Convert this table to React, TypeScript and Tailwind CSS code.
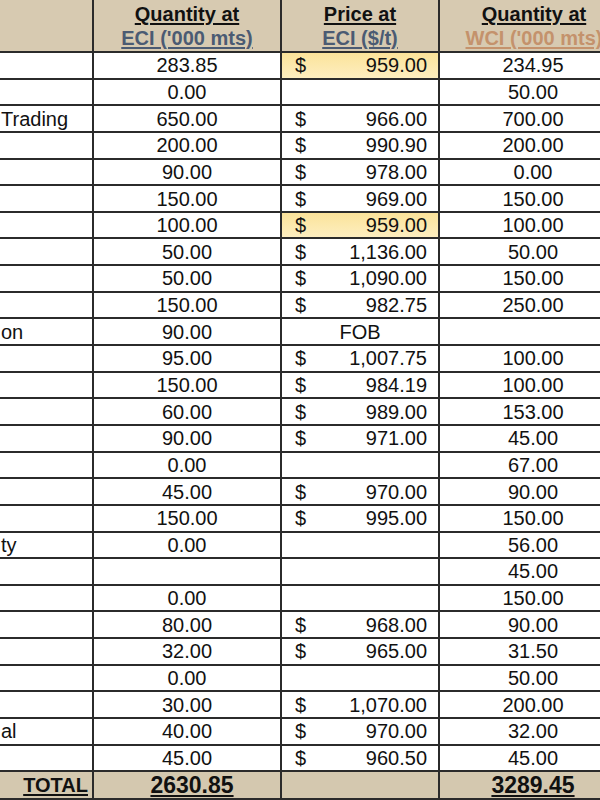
const rows: [string, string, string, string, boolean?][] = [
  ["", "283.85", "959.00", "234.95", true],
  ["", "0.00", "", "50.00"],
  ["Trading", "650.00", "966.00", "700.00"],
  ["", "200.00", "990.90", "200.00"],
  ["", "90.00", "978.00", "0.00"],
  ["", "150.00", "969.00", "150.00"],
  ["", "100.00", "959.00", "100.00", true],
  ["", "50.00", "1,136.00", "50.00"],
  ["", "50.00", "1,090.00", "150.00"],
  ["", "150.00", "982.75", "250.00"],
  ["on", "90.00", "FOB", ""],
  ["", "95.00", "1,007.75", "100.00"],
  ["", "150.00", "984.19", "100.00"],
  ["", "60.00", "989.00", "153.00"],
  ["", "90.00", "971.00", "45.00"],
  ["", "0.00", "", "67.00"],
  ["", "45.00", "970.00", "90.00"],
  ["", "150.00", "995.00", "150.00"],
  ["ty", "0.00", "", "56.00"],
  ["", "", "", "45.00"],
  ["", "0.00", "", "150.00"],
  ["", "80.00", "968.00", "90.00"],
  ["", "32.00", "965.00", "31.50"],
  ["", "0.00", "", "50.00"],
  ["", "30.00", "1,070.00", "200.00"],
  ["al", "40.00", "970.00", "32.00"],
  ["", "45.00", "960.50", "45.00"],
];

const cols = "grid grid-cols-[94px_188px_158px_160px]";

const PriceCell = ({ price, hl }: { price: string; hl?: boolean }) => {
  if (price === "FOB") {
    return (
      <div className="border-r-2 border-[#2b2b2b] flex items-center justify-center">
        FOB
      </div>
    );
  }
  return (
    <div
      className={`border-r-2 border-[#2b2b2b] flex items-center justify-between pl-[13px] pr-[11px] ${
        hl ? "bg-gradient-to-b from-[#fbe39a] to-[#fdeebf]" : ""
      }`}
    >
      {price && (
        <>
          <span>$</span>
          <span>{price}</span>
        </>
      )}
    </div>
  );
};

export default function App() {
  return (
    <div
      className="w-[600px] h-[800px] overflow-hidden bg-white text-[20px] text-[#111]"
      style={{ fontFamily: '"Liberation Sans", Arial, sans-serif' }}
    >
      <div className={`${cols} h-[53px] bg-[#d7cab1] border-b-2 border-[#2b2b2b] font-bold leading-[24px]`}>
        <div className="border-r-2 border-[#2b2b2b]"></div>
        <div className="border-r-2 border-[#2b2b2b] flex flex-col items-center pt-[2px]">
          <span className="underline decoration-2 underline-offset-2">Quantity at</span>
          <span className="underline decoration-2 underline-offset-2 text-[#4b5b73]">ECI ('000 mts)</span>
        </div>
        <div className="border-r-2 border-[#2b2b2b] flex flex-col items-center pt-[2px]">
          <span className="underline decoration-2 underline-offset-2">Price at</span>
          <span className="underline decoration-2 underline-offset-2 text-[#4b5b73]">ECI ($/t)</span>
        </div>
        <div className="flex flex-col items-center pt-[2px] pl-[28px] whitespace-nowrap">
          <span className="underline decoration-2 underline-offset-2">Quantity at</span>
          <span className="underline decoration-2 underline-offset-2 text-[#c4926c]">WCI ('000 mts)</span>
        </div>
      </div>
      {rows.map(([label, qty, price, wci, hl], i) => (
        <div key={i} className={`${cols} h-[26.65px] border-b-2 border-[#2b2b2b] leading-none`}>
          <div className="border-r-2 border-[#2b2b2b] flex items-center pl-[1px]">{label}</div>
          <div className="border-r-2 border-[#2b2b2b] flex items-center justify-center">{qty}</div>
          <PriceCell price={price} hl={hl} />
          <div className="flex items-center justify-center pl-[26px]">{wci}</div>
        </div>
      ))}
      <div className={`${cols} h-[28px] bg-[#d4c8af] border-b-2 border-[#2b2b2b] font-bold leading-none`}>
        <div className="border-r-2 border-[#2b2b2b] flex items-center justify-end pr-[4px]">
          <span className="underline decoration-2 underline-offset-2">TOTAL</span>
        </div>
        <div className="border-r-2 border-[#2b2b2b] flex items-center justify-center pl-[10px] text-[23px]">
          <span className="underline decoration-2 underline-offset-2">2630.85</span>
        </div>
        <div className="border-r-2 border-[#2b2b2b]"></div>
        <div className="flex items-center justify-center pl-[26px] text-[23px]">
          <span className="underline decoration-2 underline-offset-2">3289.45</span>
        </div>
      </div>
    </div>
  );
}
